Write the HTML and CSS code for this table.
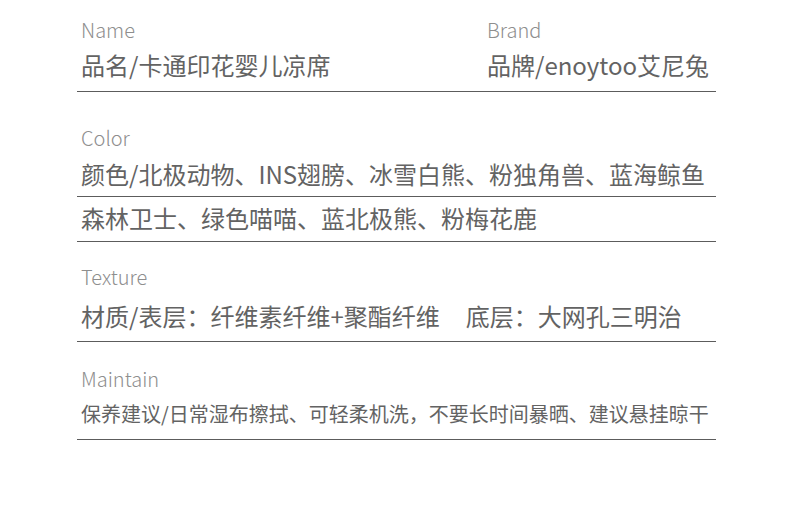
FILE: index.html
```html
<!DOCTYPE html>
<html lang="zh-CN">
<head>
    <meta charset="UTF-8">
    <meta name="viewport" content="width=device-width, initial-scale=1.0">
    <title>产品参数</title>
    <link rel="stylesheet" href="styles.css">
</head>
<body>
    <div class="spec">
        <div class="row row-first cols">
            <div class="cell">
                <div class="label">Name</div>
                <div class="value">品名/卡通印花婴儿凉席</div>
            </div>
            <div class="cell">
                <div class="label">Brand</div>
                <div class="value">品牌/enoytoo艾尼兔</div>
            </div>
        </div>

        <div class="row row-color">
            <div class="label">Color</div>
            <div class="value line">颜色/北极动物、INS翅膀、冰雪白熊、粉独角兽、蓝海鲸鱼</div>
            <div class="value line">森林卫士、绿色喵喵、蓝北极熊、粉梅花鹿</div>
        </div>

        <div class="row row-texture">
            <div class="label">Texture</div>
            <div class="value line">材质/表层：纤维素纤维+聚酯纤维<span class="gap">底层：大网孔三明治</span></div>
        </div>

        <div class="row row-maintain">
            <div class="label">Maintain</div>
            <div class="value small line">保养建议/日常湿布擦拭、可轻柔机洗，不要长时间暴晒、建议悬挂晾干</div>
        </div>
    </div>
</body>
</html>
```

FILE: styles.css
```css
body {
    margin: 0;
    background: #ffffff;
    font-family: "Noto Sans CJK SC", "Noto Sans", sans-serif;
    color: #636363;
}

.spec {
    width: 639px;
    margin-left: 77px;
}

/* each block: grey english label, chinese value, thin rule below */
.label {
    font-size: 20px;
    line-height: 28px;
    font-weight: 300;
    color: #8e8e8e;
    padding-left: 4px;
}

.value {
    font-size: 24px;
    line-height: 36px;
    font-weight: 400;
    padding-left: 4px;
    white-space: nowrap;
}

.value.small {
    font-size: 20px;
    line-height: 30px;
}

.line {
    border-bottom: 1px solid #5c5c5c;
}

.cols {
    display: grid;
    grid-template-columns: 406px 1fr;
    border-bottom: 1px solid #5c5c5c;
}

.row-first {
    padding-top: 16px;
    padding-bottom: 8px;
}

.row-first .label {
    margin-bottom: 3px;
}

.row-color {
    margin-top: 32px;
}

.row-color .label {
    margin-bottom: 4px;
}

.row-color .value {
    padding-bottom: 4px;
}

.row-color .value + .value {
    padding-top: 3px;
    padding-bottom: 5px;
}

.row-texture {
    margin-top: 21px;
}

.row-texture .label {
    margin-bottom: 7px;
}

.row-texture .value {
    padding-bottom: 7px;
}

.gap {
    margin-left: 26px;
}

.row-maintain {
    margin-top: 23px;
}

.row-maintain .label {
    margin-bottom: 6px;
}

.row-maintain .value {
    padding-bottom: 10px;
}
```
